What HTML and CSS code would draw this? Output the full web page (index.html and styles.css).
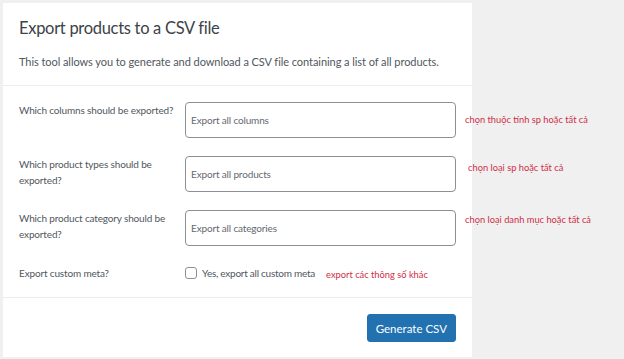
FILE: index.html
```html
<!DOCTYPE html>
<html lang="vi">
<head>
    <meta charset="UTF-8">
    <meta name="viewport" content="width=device-width, initial-scale=1.0">
    <title>Export products</title>
    <link rel="stylesheet" href="styles.css">
</head>
<body>
    <div class="wrap">
        <div class="card">
            <div class="card-header">
                <h1>Export products to a CSV file</h1>
                <p>This tool allows you to generate and download a CSV file containing a list of all products.</p>
            </div>

            <div class="card-body">
                <div class="row">
                    <label for="columns">Which columns should be exported?</label>
                    <input type="text" id="columns" placeholder="Export all columns">
                    <span class="note">chọn thuộc tính sp hoặc tất cả</span>
                </div>
                <div class="row">
                    <label for="types">Which product types should be exported?</label>
                    <input type="text" id="types" placeholder="Export all products">
                    <span class="note note-types">chọn loại sp hoặc tất cả</span>
                </div>
                <div class="row">
                    <label for="cats">Which product category should be exported?</label>
                    <input type="text" id="cats" placeholder="Export all categories">
                    <span class="note note-cats">chọn loại danh mục hoặc tất cả</span>
                </div>
                <div class="row row-meta">
                    <span class="meta-label">Export custom meta?</span>
                    <div class="meta-field">
                        <input type="checkbox" id="meta">
                        <label for="meta" class="check-label">Yes, export all custom meta</label>
                        <span class="note note-meta">export các thông số khác</span>
                    </div>
                </div>
            </div>

            <div class="card-footer">
                <button type="button">Generate CSV</button>
            </div>
        </div>
    </div>
</body>
</html>
```

FILE: styles.css
```css
body {
    margin: 0;
    background-color: #f0f0f1;
    font-family: Lato, "Open Sans", sans-serif;
    color: #50575e;
}
.wrap {
    padding: 3px 0 0 3px;
}
.card {
    width: 469px;
    height: 354px;
    background-color: #fff;
}
.card-header {
    padding: 14px 16px 0 16px;
    height: 68px;
    border-bottom: 1px solid #ececed;
}
h1 {
    margin: 0;
    font-size: 16.5px;
    font-weight: normal;
    letter-spacing: -0.3px;
    line-height: 22px;
    color: #3c434a;
}
p {
    margin: 15px 0 0;
    font-size: 11px;
    letter-spacing: -0.06px;
    line-height: 16px;
}
.card-body {
    padding: 16px 0 15px 16px;
    border-bottom: 1px solid #ececed;
}
.row {
    display: grid;
    grid-template-columns: 166px 271px auto;
    margin-bottom: 18px;
}
.row label, .meta-label {
    font-size: 10px;
    letter-spacing: -0.15px;
    line-height: 16px;
    padding-right: 6px;
}
.row input[type="text"] {
    height: 36px;
    margin: 0;
    padding: 0 5px;
    border: 1px solid #8c8f94;
    border-radius: 4px;
    font-family: inherit;
    font-size: 10px;
    letter-spacing: -0.15px;
    box-sizing: border-box;
}
.row input::placeholder {
    color: #646970;
}
.note {
    font-size: 9.3px;
    line-height: 14px;
    color: #cf2e44;
    white-space: nowrap;
    padding: 11px 0 0 9px;
}
.note-types {
    padding-top: 5px;
    padding-left: 12px;
}
.note-cats {
    padding-top: 3px;
}
.row-meta {
    margin-bottom: 0;
    align-items: center;
    height: 18px;
}
.meta-field {
    display: flex;
    align-items: center;
}
.meta-field input {
    appearance: none;
    display: block;
    flex-shrink: 0;
    width: 12px;
    height: 12px;
    margin: 0 5px 0 0;
    border: 1px solid #8c8f94;
    border-radius: 3px;
    background: #fff;
}
.row .check-label {
    font-size: 10px;
    letter-spacing: -0.25px;
    white-space: nowrap;
    padding: 0;
}
.note-meta {
    padding: 4px 0 0 11px;
}
.card-footer {
    display: flex;
    justify-content: flex-end;
    padding: 16px 16px 0 0;
}
button {
    height: 28px;
    padding: 0 8px;
    background-color: #2271b1;
    color: #fff;
    border: 1px solid #2271b1;
    border-radius: 3px;
    font-family: inherit;
    font-size: 11.5px;
    cursor: pointer;
}
```
